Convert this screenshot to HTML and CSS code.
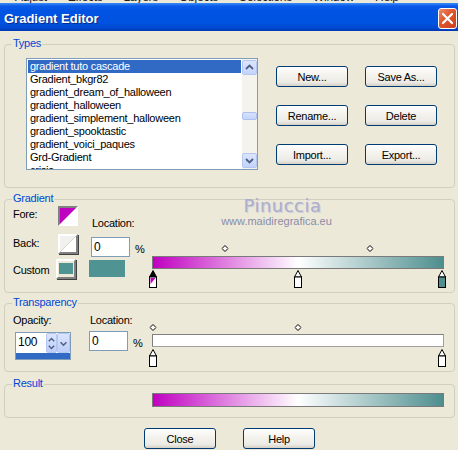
FILE: index.html
```html
<!DOCTYPE html>
<html>
<head>
<meta charset="utf-8">
<title>Gradient Editor</title>
<link rel="stylesheet" href="styles.css">
</head>
<body>
<div class="menu-strip">
  <div class="menu-line">
    <span>Adjust</span><span>Effects</span><span>Layers</span><span>Objects</span><span>Selections</span><span>Window</span><span>Help</span>
  </div>
</div>
<div class="titlebar">
  <span class="title">Gradient Editor</span>
  <span class="close-btn">
    <svg width="19" height="21" viewBox="0 0 19 21"><path d="M5 6 L14 15 M14 6 L5 15" stroke="#fff" stroke-width="2.2" stroke-linecap="round"/></svg>
  </span>
</div>
<div class="main">
  <div class="group types">
    <span class="legend">Types</span>
    <div class="listbox">
      <div class="items">
        <div class="item sel">gradient tuto cascade</div>
        <div class="item">Gradient_bkgr82</div>
        <div class="item">gradient_dream_of_halloween</div>
        <div class="item">gradient_halloween</div>
        <div class="item">gradient_simplement_halloween</div>
        <div class="item">gradient_spooktastic</div>
        <div class="item">gradient_voici_paques</div>
        <div class="item">Grd-Gradient</div>
        <div class="item">crisis</div>
      </div>
      <div class="vscroll">
        <div class="sb-btn"><svg width="13" height="13" viewBox="0 0 13 13"><path d="M3 8 L6.5 4.5 L10 8" fill="none" stroke="#4d6185" stroke-width="1.8"/></svg></div>
        <div class="sb-track"><div class="sb-thumb"></div></div>
        <div class="sb-btn"><svg width="13" height="13" viewBox="0 0 13 13"><path d="M3 5 L6.5 8.5 L10 5" fill="none" stroke="#4d6185" stroke-width="1.8"/></svg></div>
      </div>
    </div>
    <div class="btn-grid">
      <button class="btn">New...</button>
      <button class="btn">Save As...</button>
      <button class="btn">Rename...</button>
      <button class="btn">Delete</button>
      <button class="btn">Import...</button>
      <button class="btn">Export...</button>
    </div>
  </div>

  <div class="group gradient">
    <span class="legend">Gradient</span>
    <div class="watermark">
      <div class="wm-name">Pinuccia</div>
      <div class="wm-url">www.maidiregrafica.eu</div>
    </div>
    <div class="grad-grid">
      <div class="lbl lbl-fore">Fore:</div>
      <div class="swatch sunken">
        <svg width="16" height="16" viewBox="0 0 16 16"><rect width="16" height="16" fill="#fff"/><polygon points="0,0 16,0 0,16" fill="#c000c0"/></svg>
      </div>
      <div class="lbl lbl-loc">Location:</div>
      <div class="bar-col grad-col">
        <div class="markers diamonds">
          <span class="mk" style="left:25%"><svg width="7" height="7" viewBox="0 0 7 7"><polygon points="3.5,0.5 6.5,3.5 3.5,6.5 0.5,3.5" fill="#fff" stroke="#000"/></svg></span>
          <span class="mk" style="left:75%"><svg width="7" height="7" viewBox="0 0 7 7"><polygon points="3.5,0.5 6.5,3.5 3.5,6.5 0.5,3.5" fill="#fff" stroke="#000"/></svg></span>
        </div>
        <div class="bar gbar"></div>
        <div class="markers stops">
          <span class="mk" style="left:0%"><svg width="9" height="18" viewBox="0 0 9 18"><polygon points="4.5,0.5 1,7 8,7" fill="#000" stroke="#000"/><rect x="1" y="7" width="7" height="10.5" fill="#fff" stroke="#000"/><polygon points="2,8 7,8 2,14" fill="#c000c0"/></svg></span>
          <span class="mk" style="left:50%"><svg width="9" height="18" viewBox="0 0 9 18"><polygon points="4.5,0.5 1,7 8,7" fill="#fff" stroke="#000"/><rect x="1" y="7" width="7" height="10.5" fill="#fff" stroke="#000"/></svg></span>
          <span class="mk" style="left:100%"><svg width="9" height="18" viewBox="0 0 9 18"><polygon points="4.5,0.5 1,7 8,7" fill="#fff" stroke="#000"/><rect x="1" y="7" width="7" height="10.5" fill="#4f8f8f" stroke="#000"/></svg></span>
        </div>
      </div>
      <div class="lbl lbl-back">Back:</div>
      <div class="swatch raised">
        <svg width="16" height="16" viewBox="0 0 16 16"><rect width="16" height="16" fill="#fff"/><polygon points="0,0 16,0 0,16" fill="#f1f1ee"/><line x1="16" y1="0" x2="0" y2="16" stroke="#d4d4cc"/></svg>
      </div>
      <div class="loc-row">
        <div class="input">0</div><span class="pct">%</span>
      </div>
      <div class="lbl lbl-custom">Custom</div>
      <div class="swatch raised custom"><div class="teal-sq"></div></div>
      <div class="teal-rect"></div>
    </div>
  </div>

  <div class="group transparency">
    <span class="legend">Transparency</span>
    <div class="trans-grid">
      <div class="t-col">
        <div class="lbl t-lbl">Opacity:</div>
        <div class="spinner">
          <div class="spin-top">
            <div class="spin-val">100</div>
            <div class="spin-ud">
              <svg width="10" height="19" viewBox="0 0 10 19"><path d="M2 7 L5 4 L8 7" fill="none" stroke="#4d6185" stroke-width="1.6"/><path d="M2 12 L5 15 L8 12" fill="none" stroke="#4d6185" stroke-width="1.6"/></svg>
            </div>
            <div class="spin-dd">
              <svg width="13" height="19" viewBox="0 0 13 19"><path d="M3 8 L6.5 11.5 L10 8" fill="none" stroke="#4d6185" stroke-width="1.8"/></svg>
            </div>
          </div>
          <div class="spin-sel"></div>
        </div>
      </div>
      <div class="t-col">
        <div class="lbl t-lbl t-loc">Location:</div>
        <div class="loc-row t-locrow">
          <div class="input">0</div><span class="pct">%</span>
        </div>
      </div>
      <div class="trans-col">
        <div class="markers diamonds">
          <span class="mk" style="left:0%"><svg width="7" height="7" viewBox="0 0 7 7"><polygon points="3.5,0.5 6.5,3.5 3.5,6.5 0.5,3.5" fill="#fff" stroke="#000"/></svg></span>
          <span class="mk" style="left:50%"><svg width="7" height="7" viewBox="0 0 7 7"><polygon points="3.5,0.5 6.5,3.5 3.5,6.5 0.5,3.5" fill="#fff" stroke="#000"/></svg></span>
        </div>
        <div class="bar tbar"></div>
        <div class="markers stops tstops">
          <span class="mk" style="left:0%"><svg width="9" height="18" viewBox="0 0 9 18"><polygon points="4.5,0.5 1,7 8,7" fill="#fff" stroke="#000"/><rect x="1" y="7" width="7" height="10.5" fill="#fff" stroke="#000"/></svg></span>
          <span class="mk" style="left:100%"><svg width="9" height="18" viewBox="0 0 9 18"><polygon points="4.5,0.5 1,7 8,7" fill="#fff" stroke="#000"/><rect x="1" y="7" width="7" height="10.5" fill="#fff" stroke="#000"/></svg></span>
        </div>
      </div>
    </div>
  </div>

  <div class="group result">
    <span class="legend">Result</span>
    <div class="bar rbar"></div>
  </div>

  <div class="bottom-btns">
    <button class="btn">Close</button>
    <button class="btn">Help</button>
  </div>
</div>
</body>
</html>
```
FILE: styles.css
```css
* { box-sizing: border-box; }
html, body { margin: 0; padding: 0; }
body {
  width: 458px;
  height: 450px;
  overflow: hidden;
  background: #ece9d8;
  font-family: "Liberation Sans", Arial, sans-serif;
  font-size: 11px;
  letter-spacing: -0.25px;
  color: #000;
}
.menu-strip {
  height: 3px;
  overflow: hidden;
  background: #ece9d8;
}
.menu-line {
  display: flex;
  gap: 21px;
  padding-left: 15px;
  margin-top: -9px;
  font-size: 12px;
  line-height: 12px;
  color: #222;
}
.titlebar {
  height: 28px;
  display: flex;
  align-items: center;
  justify-content: space-between;
  padding: 0 1px 0 4px;
  background: linear-gradient(#3c8ef8 0px, #0a5ae8 3px, #0054e3 8px, #0052e0 20px, #0048d0 25px, #0038b0 28px);
}
.title {
  color: #fff;
  font-weight: bold;
  font-size: 13px;
  letter-spacing: 0;
  text-shadow: 1px 1px 0 #0a2a8a;
  margin-top: 2px;
}
.close-btn {
  width: 19px;
  height: 21px;
  margin-top: 3px;
  border: 1px solid #fff;
  border-radius: 3px;
  background: linear-gradient(135deg, #f08a6a 0%, #e0552c 45%, #c8401c 100%);
  display: flex;
}
.close-btn svg { margin: -1px; }
.main {
  padding: 0 3px 0 4px;
}
.group {
  position: relative;
  border: 1px solid #d0d0bf;
  border-radius: 4px;
}
.legend {
  position: absolute;
  top: -8px;
  left: 7px;
  padding: 0 1px;
  background: #ece9d8;
  color: #0046d5;
  line-height: 13px;
}
.types {
  margin-top: 13px;
  height: 144px;
  padding: 13px 0 0 21px;
  display: flex;
  gap: 18px;
}
.listbox {
  width: 232px;
  height: 112px;
  border: 1px solid #7f9db9;
  background: #fff;
  display: flex;
}
.items {
  flex: 1;
  padding: 1px 1px 0 1px;
  overflow: hidden;
}
.item {
  height: 13px;
  line-height: 13px;
  padding-left: 2px;
  white-space: nowrap;
}
.item.sel {
  background: #316ac5;
  color: #fff;
}
.vscroll {
  width: 15px;
  display: flex;
  flex-direction: column;
  padding: 1px 0;
  background: #f4f3ee;
}
.sb-btn {
  height: 15px;
  border: 1px solid #b4c6f2;
  border-radius: 2px;
  background: linear-gradient(#dbe5fd, #c3d4fc);
  display: flex;
  justify-content: center;
  align-items: center;
}
.sb-track {
  flex: 1;
}
.sb-thumb {
  margin-top: 37px;
  height: 8px;
  border: 1px solid #aebff0;
  border-radius: 2px;
  background: linear-gradient(#d6e1fd, #c4d4fb);
}
.btn-grid {
  margin-top: 8px;
  display: grid;
  grid-template-columns: 72px 72px;
  grid-auto-rows: 21px;
  column-gap: 17px;
  row-gap: 18px;
  align-self: flex-start;
}
.btn {
  font: inherit;
  letter-spacing: inherit;
  color: #000;
  width: 72px;
  height: 21px;
  padding: 0;
  border: 1px solid #003c74;
  border-radius: 3px;
  background: linear-gradient(#ffffff 0%, #f4f3ee 40%, #ecebe6 80%, #d6d0c5 100%);
}
.gradient {
  margin-top: 11px;
  height: 94px;
}
.watermark {
  position: absolute;
  left: 211px;
  top: -4px;
  width: 121px;
  text-align: center;
  pointer-events: none;
}
.wm-name {
  font-family: "DejaVu Sans", sans-serif;
  font-size: 18px;
  line-height: 19px;
  letter-spacing: 0.5px;
  color: #adadca;
  padding-left: 12px;
  text-shadow: 1px 1px 0 #cfcfdc;
}
.wm-url {
  font-size: 11px;
  line-height: 12px;
  letter-spacing: 0;
  color: #8c8ca8;
}
.grad-grid {
  display: grid;
  grid-template-columns: 45px 31px 63px 292px;
  grid-template-rows: 28px 25px 20px;
  padding: 6px 0 0 8px;
}
.lbl { line-height: 13px; white-space: nowrap; }
.lbl-fore { margin-top: 2px; }
.lbl-back { margin-top: 3px; }
.lbl-custom { margin-top: 5px; }
.lbl-loc { margin-top: 11px; padding-left: 3px; }
.swatch {
  width: 20px;
  height: 20px;
  border: 2px solid;
  display: flex;
}
.swatch.sunken {
  border-color: #808080 #ffffff #ffffff #808080;
  box-shadow: inset 1px 1px 0 #404040;
}
.swatch.raised {
  border-color: #ffffff #808080 #808080 #ffffff;
  box-shadow: 1px 1px 0 #404040;
}
.swatch.custom {
  margin-left: -2px;
  padding: 2px 1px 3px 1px;
  background: #ece9d8;
}
.teal-sq {
  flex: 1;
  background: #4f9393;
}
.loc-row {
  display: flex;
  align-items: center;
  gap: 5px;
  padding-left: 2px;
  margin-top: 1px;
}
.input {
  width: 39px;
  height: 20px;
  border: 1px solid #7f9db9;
  background: #fff;
  line-height: 18px;
  padding-left: 2px;
  font-size: 12px;
}
.pct { margin-top: 3px; }
.teal-rect {
  width: 36px;
  height: 17px;
  margin-top: 1px;
  background: #4f9393;
}
.bar-col {
  grid-column: 4;
  grid-row: 1 / span 3;
}
.grad-col { padding-top: 39px; }
.markers {
  position: relative;
  margin: 0 2px 0 1px;
}
.diamonds { height: 7px; }
.stops { height: 18px; margin-top: 1px; }
.mk {
  position: absolute;
  top: 0;
  transform: translateX(-50%);
  display: flex;
}
.bar {
  width: 292px;
  border: 1px solid #7a7a7a;
}
.gbar {
  margin-top: 4px;
  height: 13px;
  background: linear-gradient(to right, #c000c0 0%, #ffffff 50%, #4e8e8e 100%);
}
.transparency {
  margin-top: 10px;
  height: 69px;
}
.trans-grid {
  display: grid;
  grid-template-columns: 76px 63px 292px;
  padding-left: 8px;
}
.t-lbl { margin-top: 10px; }
.t-loc { padding-left: 1px; }
.spinner {
  margin-top: 5px;
  margin-left: 2px;
  width: 56px;
  height: 28px;
  border: 1px solid #7f9db9;
  background: #fff;
  display: flex;
  flex-direction: column;
}
.spin-top {
  display: flex;
  height: 20px;
}
.spin-val {
  width: 30px;
  font-size: 12px;
  line-height: 19px;
  padding-left: 2px;
}
.spin-ud, .spin-dd {
  border: 1px solid #b4c6f2;
  border-radius: 2px;
  background: linear-gradient(#dbe5fd, #bccdf8);
  display: flex;
  justify-content: center;
  align-items: center;
}
.spin-ud { width: 11px; }
.spin-dd { width: 13px; }
.spin-sel {
  flex: 1;
  background: #316ac5;
}
.t-locrow { margin-top: 4px; padding-left: 0; }
.trans-col { padding-top: 20px; }
.tbar {
  margin-top: 3px;
  height: 13px;
  background: #fff;
  border-color: #808080 #a0a0a0 #a0a0a0 #808080;
}
.tstops { margin-top: 2px; }
.result {
  margin-top: 12px;
  height: 34px;
  padding: 8px 0 0 147px;
}
.rbar {
  height: 14px;
  background: linear-gradient(to right, #c000c0 0%, #ffffff 50%, #4e8e8e 100%);
}
.bottom-btns {
  margin-top: 10px;
  display: flex;
  justify-content: center;
  gap: 27px;
}
```
